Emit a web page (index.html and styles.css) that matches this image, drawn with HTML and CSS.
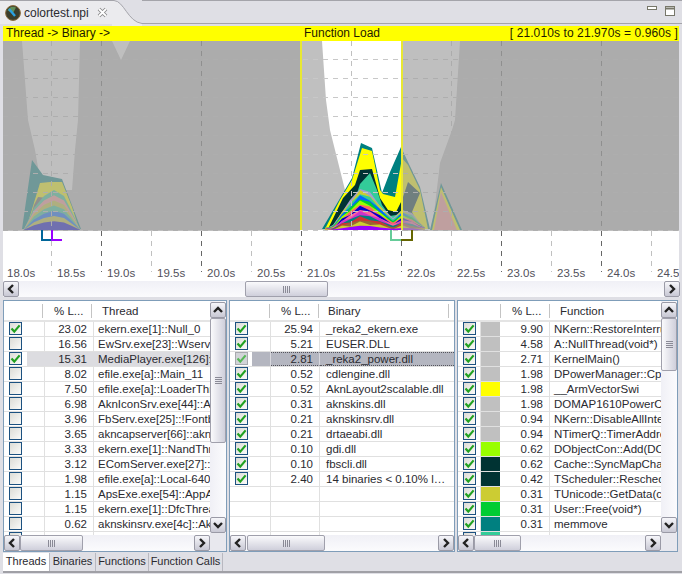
FILE: index.html
```html
<!DOCTYPE html>
<html lang="en">
  <head>
    <meta charset="UTF-8" />
    <title>colortest.npi</title>
    <link rel="stylesheet" href="styles.css">
  </head>
  <body>
    <!-- shared scrollbar arrows and table check mark -->
    <svg class="defs" width="0" height="0">
      <symbol id="arrow-left" viewBox="0 0 10 10"><path d="M7 1 3 5l4 4" fill="none" stroke="#222" stroke-width="2.4"/></symbol>
      <symbol id="arrow-right" viewBox="0 0 10 10"><path d="M3 1l4 4-4 4" fill="none" stroke="#222" stroke-width="2.4"/></symbol>
      <symbol id="arrow-up" viewBox="0 0 10 10"><path d="M1 7l4-4 4 4" fill="none" stroke="#222" stroke-width="2.4"/></symbol>
      <symbol id="arrow-down" viewBox="0 0 10 10"><path d="M1 3l4 4 4-4" fill="none" stroke="#222" stroke-width="2.4"/></symbol>
      <symbol id="tick" viewBox="0 0 13 13"><path d="M2.5 6.5 5.3 9.6 10.6 3.4" fill="none" stroke="#21a121" stroke-width="2.2"/></symbol>
    </svg>

    <!-- Editor tab row -->
    <div class="editor-tabs">
      <div class="editor-tab">
        <svg class="tab-icon" width="16" height="16" viewBox="0 0 16 16">
          <circle cx="8" cy="8" r="7.4" fill="#3a3d2c" stroke="#8a6a3a"/>
          <path d="M2.5 5.5A6 6 0 0 1 11 2.5L8 8Z" fill="#5f8f5a"/>
          <path d="M4 4l6 7" stroke="#2aa0e0" stroke-width="2.4"/>
        </svg>
        <span class="tab-name">colortest.npi</span>
        <svg class="tab-close" width="11" height="11" viewBox="0 0 11 11">
          <path d="M2 2l7 7M9 2l-7 7" stroke="#8a8a8a" stroke-width="3.6"/>
          <path d="M2 2l7 7M9 2l-7 7" stroke="#fff" stroke-width="1.8"/>
        </svg>
      </div>
      <svg class="tab-curve" width="30" height="26" viewBox="0 0 30 26">
        <path d="M0 0H2C12 1 16 22 30 23V26H0Z" fill="#ebebee"/>
        <path d="M0 .5H2C12 1 16 22 30 23.5" fill="none" stroke="#a4a4aa"/>
      </svg>
      <div class="tab-rest">
        <svg class="view-min" width="10" height="5"><rect x=".5" y=".5" width="9" height="3" fill="#fff" stroke="#77776a"/></svg>
        <svg class="view-max" width="11" height="11"><rect x=".5" y=".5" width="9" height="9" fill="#fff" stroke="#77776a"/><path d="M1 2.5h8" stroke="#77776a" stroke-width="2"/></svg>
      </div>
    </div>

    <div class="title-bar">
      <span class="title-left">Thread -&gt; Binary -&gt;</span>
      <span class="title-mid">Function Load</span>
      <span class="title-right">[ 21.010s to 21.970s = 0.960s ]</span>
    </div>

    <svg id="chart" class="chart" width="676" height="240" viewBox="3 41 676 240"></svg>

    <div class="hbar chart-scroll">
      <button class="sb-btn"><svg width="10" height="10"><use href="#arrow-left"/></svg></button>
      <div class="sb-thumb thumb-chart"><i class="grip"></i></div>
      <div class="sb-fill"></div>
      <button class="sb-btn"><svg width="10" height="10"><use href="#arrow-right"/></svg></button>
    </div>

    <div class="panes">
      <!-- Threads -->
      <section class="pane pane-thread">
        <div class="pane-main">
          <div class="thead"><span class="h-check"></span><span class="h-num">% L...</span><span class="h-name">Thread</span></div>
          <div class="tbody">
            <div class="row"><span class="c-check"><b class="box on"><svg width="13" height="13"><use href="#tick"/></svg></b></span><span class="c-num">23.02</span><span class="c-name">ekern.exe[1]::Null_0</span></div>
            <div class="row"><span class="c-check"><b class="box"></b></span><span class="c-num">16.56</span><span class="c-name">EwSrv.exe[23]::Wserv</span></div>
            <div class="row row-dim"><span class="c-check"><b class="box on"><svg width="13" height="13"><use href="#tick"/></svg></b></span><span class="c-num">15.31</span><span class="c-name">MediaPlayer.exe[126]::Main</span></div>
            <div class="row"><span class="c-check"><b class="box"></b></span><span class="c-num">8.02</span><span class="c-name">efile.exe[a]::Main_11</span></div>
            <div class="row"><span class="c-check"><b class="box"></b></span><span class="c-num">7.50</span><span class="c-name">efile.exe[a]::LoaderThread</span></div>
            <div class="row"><span class="c-check"><b class="box"></b></span><span class="c-num">6.98</span><span class="c-name">AknIconSrv.exe[44]::AknIcon</span></div>
            <div class="row"><span class="c-check"><b class="box"></b></span><span class="c-num">3.96</span><span class="c-name">FbServ.exe[25]::!Fontbitmap</span></div>
            <div class="row"><span class="c-check"><b class="box"></b></span><span class="c-num">3.65</span><span class="c-name">akncapserver[66]::akncap</span></div>
            <div class="row"><span class="c-check"><b class="box"></b></span><span class="c-num">3.33</span><span class="c-name">ekern.exe[1]::NandThread</span></div>
            <div class="row"><span class="c-check"><b class="box"></b></span><span class="c-num">3.12</span><span class="c-name">EComServer.exe[27]::EComServer</span></div>
            <div class="row"><span class="c-check"><b class="box"></b></span><span class="c-num">1.98</span><span class="c-name">efile.exe[a]::Local-640</span></div>
            <div class="row"><span class="c-check"><b class="box"></b></span><span class="c-num">1.15</span><span class="c-name">ApsExe.exe[54]::AppArc</span></div>
            <div class="row"><span class="c-check"><b class="box"></b></span><span class="c-num">1.15</span><span class="c-name">ekern.exe[1]::DfcThread</span></div>
            <div class="row"><span class="c-check"><b class="box"></b></span><span class="c-num">0.62</span><span class="c-name">aknskinsrv.exe[4c]::AknSkin</span></div>
            <div class="row"><span class="c-check"><b class="box"></b></span><span class="c-num"></span><span class="c-name"></span></div>
          </div>
          <div class="hbar">
            <button class="sb-btn"><svg width="10" height="10"><use href="#arrow-left"/></svg></button>
            <div class="sb-thumb thumb-thread"><i class="grip"></i></div>
            <div class="sb-fill"></div>
            <button class="sb-btn"><svg width="10" height="10"><use href="#arrow-right"/></svg></button>
          </div>
        </div>
        <div class="vbar">
          <button class="sb-btn"><svg width="10" height="10"><use href="#arrow-up"/></svg></button>
          <div class="vthumb vthumb-thread"><i class="vgrip"></i></div>
          <div class="sb-fill"></div>
          <button class="sb-btn"><svg width="10" height="10"><use href="#arrow-down"/></svg></button>
          <div class="vcorner"></div>
        </div>
      </section>

      <!-- Binaries -->
      <section class="pane pane-binary">
        <div class="pane-main">
          <div class="thead"><span class="h-check"></span><span class="h-num">% L...</span><span class="h-name">Binary</span></div>
          <div class="tbody">
            <div class="row"><span class="c-check"><b class="box on"><svg width="13" height="13"><use href="#tick"/></svg></b></span><span class="c-num">25.94</span><span class="c-name">_reka2_ekern.exe</span></div>
            <div class="row"><span class="c-check"><b class="box on"><svg width="13" height="13"><use href="#tick"/></svg></b></span><span class="c-num">5.21</span><span class="c-name">EUSER.DLL</span></div>
            <div class="row row-sel"><span class="c-check"><b class="box on faded"><svg width="13" height="13"><use href="#tick"/></svg></b></span><span class="c-num">2.81</span><span class="c-name">_reka2_power.dll</span></div>
            <div class="row"><span class="c-check"><b class="box on"><svg width="13" height="13"><use href="#tick"/></svg></b></span><span class="c-num">0.52</span><span class="c-name">cdlengine.dll</span></div>
            <div class="row"><span class="c-check"><b class="box on"><svg width="13" height="13"><use href="#tick"/></svg></b></span><span class="c-num">0.52</span><span class="c-name">AknLayout2scalable.dll</span></div>
            <div class="row"><span class="c-check"><b class="box on"><svg width="13" height="13"><use href="#tick"/></svg></b></span><span class="c-num">0.31</span><span class="c-name">aknskins.dll</span></div>
            <div class="row"><span class="c-check"><b class="box on"><svg width="13" height="13"><use href="#tick"/></svg></b></span><span class="c-num">0.21</span><span class="c-name">aknskinsrv.dll</span></div>
            <div class="row"><span class="c-check"><b class="box on"><svg width="13" height="13"><use href="#tick"/></svg></b></span><span class="c-num">0.21</span><span class="c-name">drtaeabi.dll</span></div>
            <div class="row"><span class="c-check"><b class="box on"><svg width="13" height="13"><use href="#tick"/></svg></b></span><span class="c-num">0.10</span><span class="c-name">gdi.dll</span></div>
            <div class="row"><span class="c-check"><b class="box on"><svg width="13" height="13"><use href="#tick"/></svg></b></span><span class="c-num">0.10</span><span class="c-name">fbscli.dll</span></div>
            <div class="row"><span class="c-check"><b class="box on"><svg width="13" height="13"><use href="#tick"/></svg></b></span><span class="c-num">2.40</span><span class="c-name">14 binaries &lt; 0.10% l…</span></div>
            <div class="row"><span class="c-check"></span><span class="c-num"></span><span class="c-name"></span></div>
            <div class="row"><span class="c-check"></span><span class="c-num"></span><span class="c-name"></span></div>
            <div class="row"><span class="c-check"></span><span class="c-num"></span><span class="c-name"></span></div>
            <div class="row"><span class="c-check"></span><span class="c-num"></span><span class="c-name"></span></div>
          </div>
          <div class="hbar">
            <button class="sb-btn"><svg width="10" height="10"><use href="#arrow-left"/></svg></button>
            <div class="sb-thumb thumb-binary"><i class="grip"></i></div>
            <div class="sb-fill"></div>
            <button class="sb-btn"><svg width="10" height="10"><use href="#arrow-right"/></svg></button>
          </div>
        </div>
      </section>

      <!-- Functions -->
      <section class="pane pane-function">
        <div class="pane-main">
          <div class="thead"><span class="h-check"></span><span class="h-num">% L...</span><span class="h-name">Function</span></div>
          <div class="tbody">
            <div class="row"><span class="c-check"><b class="box on"><svg width="13" height="13"><use href="#tick"/></svg></b></span><span class="c-swatch sw-gray"></span><span class="c-num">9.90</span><span class="c-name">NKern::RestoreInterrupts</span></div>
            <div class="row"><span class="c-check"><b class="box on"><svg width="13" height="13"><use href="#tick"/></svg></b></span><span class="c-swatch sw-gray"></span><span class="c-num">4.58</span><span class="c-name">A::NullThread(void*)</span></div>
            <div class="row"><span class="c-check"><b class="box on"><svg width="13" height="13"><use href="#tick"/></svg></b></span><span class="c-swatch sw-gray"></span><span class="c-num">2.71</span><span class="c-name">KernelMain()</span></div>
            <div class="row"><span class="c-check"><b class="box on"><svg width="13" height="13"><use href="#tick"/></svg></b></span><span class="c-swatch sw-gray"></span><span class="c-num">1.98</span><span class="c-name">DPowerManager::CpuIdle</span></div>
            <div class="row"><span class="c-check"><b class="box on"><svg width="13" height="13"><use href="#tick"/></svg></b></span><span class="c-swatch sw-yellow"></span><span class="c-num">1.98</span><span class="c-name">__ArmVectorSwi</span></div>
            <div class="row"><span class="c-check"><b class="box on"><svg width="13" height="13"><use href="#tick"/></svg></b></span><span class="c-swatch sw-gray"></span><span class="c-num">1.98</span><span class="c-name">DOMAP1610PowerController</span></div>
            <div class="row"><span class="c-check"><b class="box on"><svg width="13" height="13"><use href="#tick"/></svg></b></span><span class="c-swatch sw-gray"></span><span class="c-num">0.94</span><span class="c-name">NKern::DisableAllInterrupts</span></div>
            <div class="row"><span class="c-check"><b class="box on"><svg width="13" height="13"><use href="#tick"/></svg></b></span><span class="c-swatch sw-gray"></span><span class="c-num">0.94</span><span class="c-name">NTimerQ::TimerAddress</span></div>
            <div class="row"><span class="c-check"><b class="box on"><svg width="13" height="13"><use href="#tick"/></svg></b></span><span class="c-swatch sw-lime"></span><span class="c-num">0.62</span><span class="c-name">DObjectCon::Add(DObject)</span></div>
            <div class="row"><span class="c-check"><b class="box on"><svg width="13" height="13"><use href="#tick"/></svg></b></span><span class="c-swatch sw-dark"></span><span class="c-num">0.62</span><span class="c-name">Cache::SyncMapChanges</span></div>
            <div class="row"><span class="c-check"><b class="box on"><svg width="13" height="13"><use href="#tick"/></svg></b></span><span class="c-swatch sw-dark"></span><span class="c-num">0.42</span><span class="c-name">TScheduler::Reschedule</span></div>
            <div class="row"><span class="c-check"><b class="box on"><svg width="13" height="13"><use href="#tick"/></svg></b></span><span class="c-swatch sw-olive"></span><span class="c-num">0.31</span><span class="c-name">TUnicode::GetData(const)</span></div>
            <div class="row"><span class="c-check"><b class="box on"><svg width="13" height="13"><use href="#tick"/></svg></b></span><span class="c-swatch sw-green"></span><span class="c-num">0.31</span><span class="c-name">User::Free(void*)</span></div>
            <div class="row"><span class="c-check"><b class="box on"><svg width="13" height="13"><use href="#tick"/></svg></b></span><span class="c-swatch sw-teal"></span><span class="c-num">0.31</span><span class="c-name">memmove</span></div>
            <div class="row"><span class="c-check"><b class="box on"></b></span><span class="c-swatch sw-mint"></span><span class="c-num"></span><span class="c-name"></span></div>
          </div>
          <div class="hbar">
            <button class="sb-btn"><svg width="10" height="10"><use href="#arrow-left"/></svg></button>
            <div class="sb-thumb thumb-function"><i class="grip"></i></div>
            <div class="sb-fill"></div>
            <button class="sb-btn"><svg width="10" height="10"><use href="#arrow-right"/></svg></button>
          </div>
        </div>
        <div class="vbar">
          <button class="sb-btn"><svg width="10" height="10"><use href="#arrow-up"/></svg></button>
          <div class="vthumb vthumb-function"><i class="vgrip"></i></div>
          <div class="sb-fill"></div>
          <button class="sb-btn"><svg width="10" height="10"><use href="#arrow-down"/></svg></button>
          <div class="vcorner"></div>
        </div>
      </section>
    </div>

    <div class="page-tabs">
      <span class="page-tab active">Threads</span>
      <span class="page-tab">Binaries</span>
      <span class="page-tab">Functions</span>
      <span class="page-tab">Function Calls</span>
    </div>

    <script src="chart.js"></script>
  </body>
</html>
```

FILE: styles.css
```css
/* General Styling */
body {
  margin: 0;
  width: 682px;
  height: 574px;
  overflow: hidden;
  background-color: #dfdfe5;
  font-family: "Liberation Sans", Arial, sans-serif;
  font-size: 11.5px;
  color: #2a2a30;
}
.defs {
  display: block;
  height: 0;
}

/* Editor tab row */
.editor-tabs {
  display: flex;
  height: 26px;
}
.editor-tab {
  display: flex;
  align-items: center;
  width: 112px;
  height: 24px;
  padding-left: 5px;
  box-sizing: border-box;
  background-color: #ebebee;
  border-top: 1px solid #a4a4aa;
}
.tab-icon {
  margin-top: 1px;
}
.tab-name {
  margin-left: 3px;
  font-size: 12px;
}
.tab-close {
  margin-left: 8px;
}
.tab-curve {
  flex: none;
  display: block;
}
.tab-rest {
  flex: 1;
  display: flex;
  align-items: flex-start;
  height: 24px;
  padding: 5px 0 0 505px;
  box-sizing: border-box;
  border-top: 1px solid #a4a4aa;
  border-bottom: 1px solid #a4a4aa;
}
.view-max {
  margin-left: 8px;
}

/* Yellow heading of the graph */
.title-bar {
  display: grid;
  grid-template-columns: 1fr auto 1fr;
  width: 672px;
  height: 15px;
  margin: 0 3px;
  padding: 0 1px 0 3px;
  line-height: 15px;
  font-size: 12px;
  background-color: #ffff00;
  color: #1e1a00;
}
.title-right {
  text-align: right;
  letter-spacing: 0.1px;
}

.chart {
  display: block;
  margin-left: 3px;
  background-color: #fff;
}

/* Scrollbars */
.hbar {
  display: flex;
  height: 16px;
  flex: none;
  background: linear-gradient(#f0f0f6, #fbfbfd);
}
.chart-scroll {
  margin: 0 2px 0 3px;
}
.sb-btn {
  flex: none;
  display: flex;
  align-items: center;
  justify-content: center;
  width: 16px;
  height: 16px;
  padding: 0;
  border: 1px solid #9a9aa6;
  border-radius: 2px;
  background: linear-gradient(#f6f6fa, #c8c8d4);
}
.sb-thumb {
  display: flex;
  align-items: center;
  justify-content: center;
  border: 1px solid #a0a0ac;
  border-radius: 2px;
  box-sizing: border-box;
  background: linear-gradient(#fafafc, #cfcfdb);
}
.sb-fill {
  flex: 1;
}
.grip {
  width: 7px;
  height: 7px;
  background: repeating-linear-gradient(90deg, #8a8a96 0 1px, transparent 1px 2px);
}
.thumb-chart {
  width: 83px;
  margin-left: 226px;
}
.thumb-thread {
  width: 63px;
}
.thumb-binary {
  width: 78px;
  margin-left: 1px;
}
.thumb-function {
  width: 47px;
}
.vbar {
  display: flex;
  flex-direction: column;
  flex: none;
  width: 16px;
  padding-top: 1px;
  background: linear-gradient(90deg, #f0f0f6, #fbfbfd);
}
.vthumb {
  display: flex;
  align-items: center;
  justify-content: center;
  width: 16px;
  box-sizing: border-box;
  border: 1px solid #a0a0ac;
  border-radius: 2px;
  background: linear-gradient(90deg, #fafafc, #cfcfdb);
}
.vgrip {
  width: 7px;
  height: 7px;
  background: repeating-linear-gradient(#8a8a96 0 1px, transparent 1px 2px);
}
.vthumb-thread {
  height: 125px;
}
.vthumb-function {
  height: 53px;
}
.vcorner {
  height: 18px;
  background-color: #e8e8ee;
}

/* Table panes */
.panes {
  display: flex;
  gap: 2px;
  height: 252px;
  margin: 3px 4px 0 3px;
}
.pane {
  display: flex;
  min-width: 0;
  box-sizing: border-box;
  border: 1px solid #7f9db9;
  background-color: #fff;
}
.pane-thread {
  flex: none;
  width: 224px;
}
.pane-binary {
  flex: none;
  width: 226px;
}
.pane-function {
  flex: 1;
}
.pane-main {
  flex: 1;
  min-width: 0;
  display: flex;
  flex-direction: column;
}
.thead {
  display: flex;
  flex: none;
  height: 21px;
  line-height: 20px;
  border-bottom: 2px solid #e4e4e4;
  box-sizing: border-box;
}
.thead span {
  box-sizing: border-box;
  height: 14px;
  margin-top: 3px;
  line-height: 14px;
  border-right: 1px solid #c4c4c4;
}
.h-check {
  width: 39px;
}
.h-num {
  width: 49px;
  padding-left: 11px;
}
.h-name {
  flex: 1;
  padding-left: 10px;
  border-right: none !important;
}
.tbody {
  flex: 1;
  overflow: hidden;
}
.row {
  display: flex;
  height: 15px;
  box-sizing: border-box;
  border-bottom: 1px solid #e0e0e0;
  line-height: 14px;
}
.c-check {
  flex: none;
  width: 41px;
  padding-left: 5px;
  box-sizing: border-box;
  border-right: 1px solid #e0e0e0;
}
.c-num {
  flex: none;
  width: 49px;
  padding-right: 6px;
  box-sizing: border-box;
  text-align: right;
  border-right: 1px solid #e0e0e0;
}
.c-name {
  flex: 1;
  min-width: 0;
  padding-left: 4px;
  overflow: hidden;
  white-space: nowrap;
}
.box {
  display: block;
  width: 13px;
  height: 13px;
  box-sizing: border-box;
  border: 1px solid #1c5180;
  background: linear-gradient(135deg, #dcdcd6, #fbfbf9);
}
.box svg {
  display: block;
  margin: -1px;
}
.box.faded {
  border-color: #8a8d94;
  background: #c4c6cc;
  opacity: 0.75;
}
.row-dim {
  background: linear-gradient(90deg, #fff 23px, #dcdce0 23px);
}
.row-dim .c-check,
.row-dim .c-num {
  border-right-color: #dcdce0;
}
.row-sel {
  background: linear-gradient(90deg, #fff 22px, #b4b6c0 22px);
}
.row-sel .c-check,
.row-sel .c-num {
  border-right-color: #d8d8de;
}
.row-sel .c-num,
.row-sel .c-name {
  border-top: 1px dotted #55555c;
  border-bottom: 1px dotted #55555c;
  line-height: 12px;
}

/* Pane specific column widths */
.pane-binary .h-check {
  width: 40px;
}
.pane-binary .c-name {
  padding-left: 6px;
}
.pane-binary .h-name {
  flex: none;
  width: 130px;
  padding-left: 9px;
  border-right: 1px solid #c4c4c4 !important;
}
.pane-function .c-check {
  width: 23px;
}
.c-swatch {
  flex: none;
  width: 19px;
  border-right: 1px solid #fff;
}
.pane-function .h-check {
  width: 43px;
}
.sw-gray {
  background-color: #c0c0c0;
}
.sw-yellow {
  background-color: #ffff00;
}
.sw-lime {
  background-color: #99ff00;
}
.sw-dark {
  background-color: #003333;
}
.sw-olive {
  background-color: #cccc33;
}
.sw-green {
  background-color: #00cc33;
}
.sw-teal {
  background-color: #008080;
}
.sw-mint {
  background-color: #33cc99;
}

/* Bottom page tabs */
.page-tabs {
  display: grid;
  grid-template-columns: 47px 46px 53px 74px;
  width: 679px;
  height: 18px;
  margin: 1px 0 0 3px;
  border-bottom: 2px solid #a0a0a6;
}
.page-tab {
  line-height: 17px;
  font-size: 11px;
  text-align: center;
  border-right: 1px solid #b8b8c0;
}
.page-tab.active {
  background-color: #fff;
}
```

FILE: chart.js
```js
// Load graph: grey base, coloured stacks, grid, then the dimming outside the selection
const chart = document.getElementById("chart");
const NS = "http://www.w3.org/2000/svg";
const BASE_Y = 230;

function add(tag, attrs, text) {
  const el = document.createElementNS(NS, tag);
  for (const key in attrs) el.setAttribute(key, attrs[key]);
  if (text) el.textContent = text;
  chart.appendChild(el);
}

function poly(points, fill) {
  add("polygon", { points: points, fill: fill });
}

// Band of a stack: the top line squeezed towards the base by factor f
function band(xs, tops, f, fill, wobble) {
  const pts = xs.map((x, i) => {
    const w = wobble ? ((i % 2) * 2 - 1) * wobble : 0;
    return x + "," + Math.min(BASE_Y, BASE_Y - (BASE_Y - tops[i]) * f + w);
  });
  pts.push(xs[xs.length - 1] + "," + BASE_Y, xs[0] + "," + BASE_Y);
  poly(pts.join(" "), fill);
}

poly("3,41 679,41 679,230 3,230", "#c0c0c0");

// White parts of the load shape
poly("22,41 80,41 78,120 75,150 72,190 42,190 35,150 28,120", "#fff");
poly("112,41 130,41 121,60", "#fff");
poly("322,41 460,41 455,120 452,130 440,163 432,230 345,230 345,190 330,130 326,100", "#fff");

// Main stack inside the selection
poly("322,229 342,195 352,178 361,143 372,148 382,193 390,172 401,147 408,162 420,187 430,229", "#008080");
poly("325,229 340,200 352,180 362,148 372,151 380,190 383,194 395,197 402,158 408,165 420,190 428,229", "#ffff00");
poly("328,229 343,198 355,185 360,170 372,169 377,187 380,198 388,210 396,212 402,200 408,182 420,193 412,212 420,229", "#003333");
poly("350,215 360,184 370,173 377,190 382,205 390,216 402,214 410,218 396,222 370,210", "#33cc99");

const xs = [325, 333, 342, 350, 360, 370, 380, 393, 402, 412, 425];
const tops = [229, 225, 212, 200, 189, 192, 206, 218, 210, 213, 229];
const colors = [
  "#a0a0d0", "#cccc33", "#33cc99", "#0066ff", "#00cc33", "#99ff00",
  "#ff6666", "#0000cc", "#ff6699", "#cc33cc", "#008080", "#cc3333",
  "#996633", "#cccc33", "#9900ff",
];
colors.forEach((c, i) => {
  band(xs, tops, 1 - i * 0.064, c, i % 2 === 1 ? 1.5 : 0);
});

// Small hill after the selection
poly("430,230 441,183 462,230", "#008080");
poly("432,230 441,187 460,230", "#ffff00");
poly("434,230 441,192 457,230", "#ff9999");

// Small stack at the start of the trace
poly("22,229 32,160 43,175 62,179 81,229", "#008080");
poly("26,229 40,183 50,182 62,182 72,207 79,229", "#ffff00");
poly("27,229 34,205 38,197 48,198 42,205 32,229", "#666");
const smallXs = [24, 34, 44, 54, 64, 72, 80];
const smallTops = [229, 208, 196, 190, 196, 212, 229];
["#33cc99", "#ff9999", "#cccc33", "#33cc99", "#0066ff", "#cccc33", "#0000cc"].forEach((c, i) => {
  band(smallXs, smallTops, 1 - i * 0.13, c);
});

// Grid
for (let y = 60; y <= 231; y += 19) {
  add("line", { x1: 3, x2: 679, y1: y - 0.5, y2: y - 0.5, stroke: "#c8c8c8", "stroke-dasharray": "5 5" });
}
for (let x = 51, n = 1; x < 679; x += 50, n++) {
  const major = n % 2 === 0;
  add("line", {
    x1: x + 0.5, x2: x + 0.5, y1: 41, y2: 272,
    stroke: major ? "#666" : "#c0c0c0",
    "stroke-dasharray": "5 5",
  });
}

// Everything outside the selected time range is dimmed
add("rect", { x: 3, y: 41, width: 297, height: 190, fill: "#a2a2a2", "fill-opacity": 0.69 });
add("rect", { x: 402, y: 41, width: 277, height: 190, fill: "#a2a2a2", "fill-opacity": 0.69 });

// Selection edges
add("rect", { x: 300, y: 41, width: 2, height: 189, fill: "#e8e832" });
add("rect", { x: 401, y: 41, width: 2, height: 189, fill: "#e8e832" });

// Markers below the graph
add("polyline", { points: "42,230 42,240 52,240", fill: "none", stroke: "#006699", "stroke-width": 2 });
add("polyline", { points: "52,230 52,240 62,240", fill: "none", stroke: "#9900ff", "stroke-width": 2 });
add("polyline", { points: "391,230 391,240 401,240", fill: "none", stroke: "#66cc99", "stroke-width": 2 });
add("polyline", { points: "401,240 412,240 412,230", fill: "none", stroke: "#666600", "stroke-width": 2 });

// Time axis labels
for (let i = 0; i < 14; i++) {
  add("text", {
    x: 7 + i * 50, y: 277, fill: "#50505a",
    "font-family": "Liberation Sans, Arial, sans-serif", "font-size": 11.5,
  }, (18 + i / 2).toFixed(1) + "s");
}
```
